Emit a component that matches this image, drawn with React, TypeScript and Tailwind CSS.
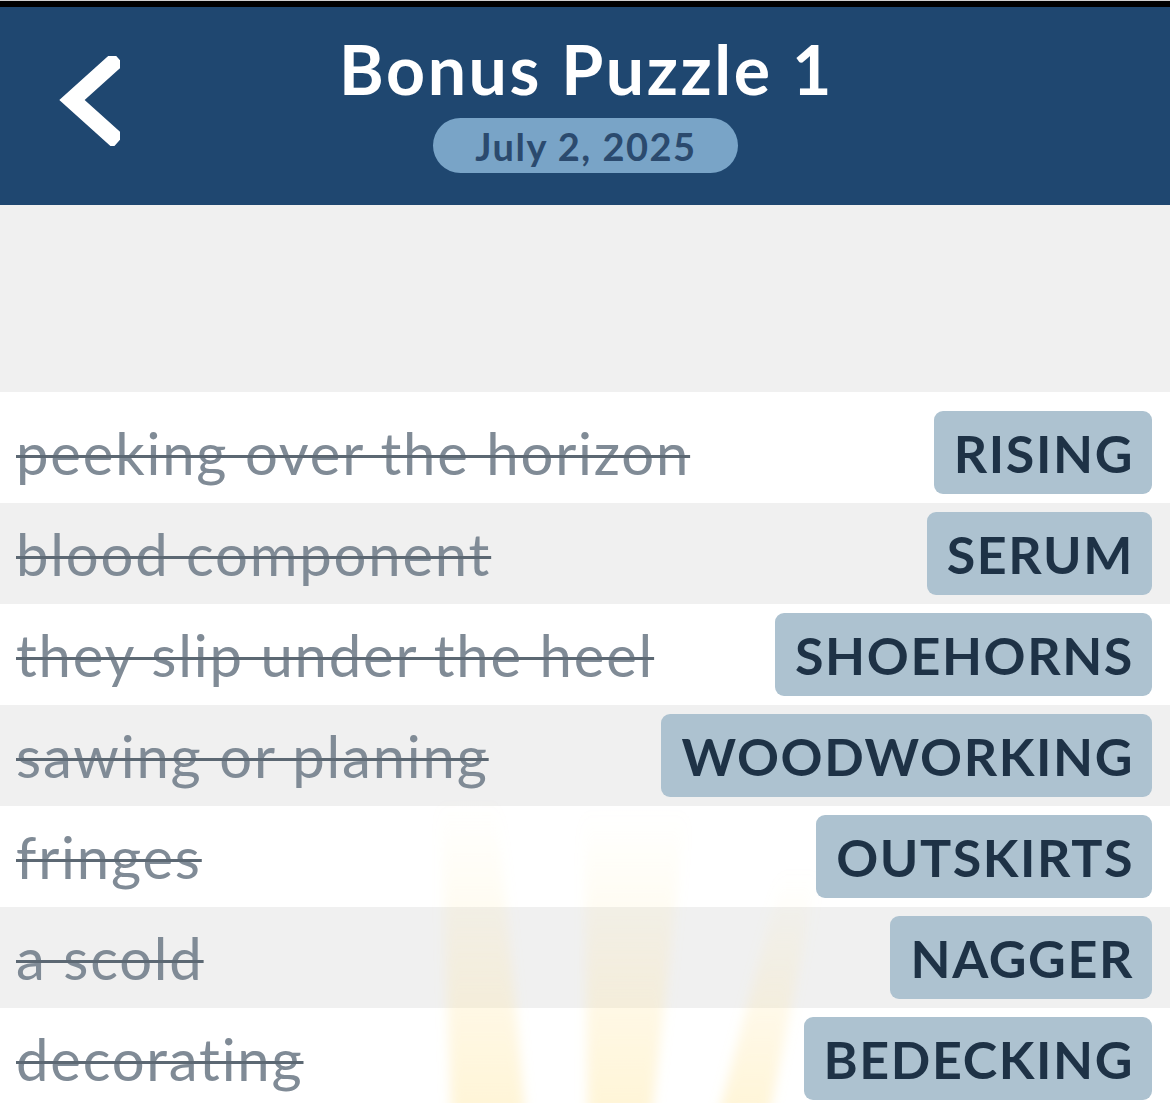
import React from "react";

const rows = [
  { clue: "peeking over the horizon", answer: "RISING" },
  { clue: "blood component", answer: "SERUM" },
  { clue: "they slip under the heel", answer: "SHOEHORNS" },
  { clue: "sawing or planing", answer: "WOODWORKING" },
  { clue: "fringes", answer: "OUTSKIRTS" },
  { clue: "a scold", answer: "NAGGER" },
  { clue: "decorating", answer: "BEDECKING" },
];

function Rays() {
  return (
    <svg
      className="pointer-events-none absolute left-0 top-0"
      width="1170"
      height="720"
      viewBox="0 0 1170 720"
    >
      <defs>
        <linearGradient id="rayg" x1="0" y1="0" x2="0" y2="1">
          <stop offset="0" stopColor="#ffe6a0" stopOpacity="0" />
          <stop offset="0.5" stopColor="#ffe6a0" stopOpacity="0.22" />
          <stop offset="1" stopColor="#ffe6a0" stopOpacity="0.45" />
        </linearGradient>
        <filter id="soft" x="-50%" y="-20%" width="200%" height="140%">
          <feGaussianBlur stdDeviation="6" />
        </filter>
      </defs>
      <g filter="url(#soft)">
        <polygon points="440,410 497,410 527,740 452,740" fill="url(#rayg)" />
        <polygon points="584,420 686,420 650,740 588,740" fill="url(#rayg)" />
        <polygon points="782,480 818,480 766,740 714,740" fill="url(#rayg)" />
      </g>
    </svg>
  );
}

export default function App() {
  return (
    <div
      className="w-[1170px] h-[1103px] overflow-hidden bg-[#f0f0f0]"
      style={{ fontFamily: "Lato, 'Open Sans', sans-serif" }}
    >
      <div className="h-[7px] bg-black border-t border-[#d0d0d0]" />
      <div className="relative h-[198px] bg-[#1f4770] flex flex-col items-center">
        <svg
          className="absolute left-[58px] top-[49px]"
          width="62"
          height="90"
          viewBox="0 0 62 90"
        >
          <polyline
            points="54,8 14,44 54,80"
            fill="none"
            stroke="white"
            strokeWidth="17"
            strokeLinecap="square"
            strokeLinejoin="miter"
          />
        </svg>
        <div className="mt-[22px] pl-[3px] text-white font-bold text-[68px] leading-[80px] tracking-[2.6px]">
          Bonus Puzzle 1
        </div>
        <div className="mt-[9px] h-[55px] w-[305px] rounded-full bg-[#79a4c7] flex items-center justify-center pl-[2px] text-[#2b4a6e] font-bold text-[38px] leading-none tracking-[1.5px]">
          July 2, 2025
        </div>
      </div>
      <div className="h-[187px] bg-[#f0f0f0]" />
      <div className="relative bg-white pt-[10px]">
        {rows.map((r, i) => (
          <div
            key={i}
            className={`relative h-[101px] flex items-center justify-between pl-[16px] pr-[18px] ${
              i % 2 === 1 ? "bg-[#f0f0f0]" : "bg-white"
            }`}
          >
            <span className="relative z-10 text-[58px] tracking-[1.8px] text-[#808b96] line-through decoration-[#5c6873] decoration-[3px] leading-none">
              {r.clue}
            </span>
            <span className="relative z-10 h-[83px] rounded-[9px] bg-[#adc2d0] pl-[20px] pr-[18px] flex items-center text-[#1e3246] font-bold text-[52px] tracking-[1.6px] leading-none">
              {r.answer}
            </span>
          </div>
        ))}
        <Rays />
      </div>
    </div>
  );
}
